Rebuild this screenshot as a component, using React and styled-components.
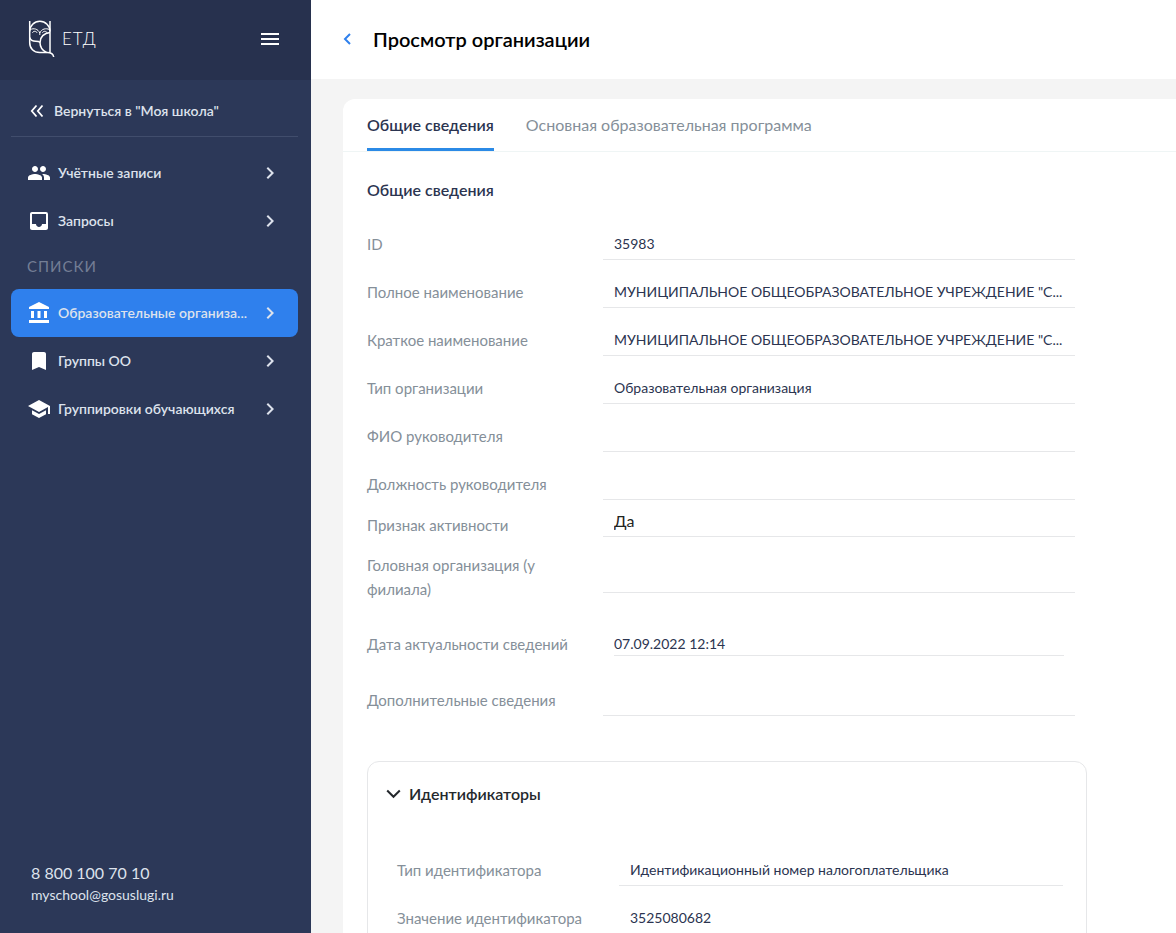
import React, { useId, useState } from 'react';
import styled, { createGlobalStyle, css } from 'styled-components';
import {
  MdAccountBalance,
  MdBookmark,
  MdChevronRight,
  MdInbox,
  MdMenu,
  MdPeople,
  MdSchool,
} from 'react-icons/md';

const navy = '#2c3858';
const darkNavy = '#27314e';
const blue = '#2f80ed';
const textColor = '#2b3450';
const labelColor = '#858f99';
const lineColor = '#e6e7e9';

const GlobalStyle = createGlobalStyle`
  * {
    box-sizing: border-box;
  }

  body {
    margin: 0;
    background: #f4f4f4;
    color: ${textColor};
    font-family: Lato, 'Open Sans', sans-serif;
    font-size: 15px;
    line-height: 24px;
  }

  button,
  input {
    font: inherit;
    color: inherit;
  }

  button {
    padding: 0;
    border: 0;
    background: none;
    cursor: pointer;
  }

  a {
    color: inherit;
    text-decoration: none;
  }
`;

const Layout = styled.div`
  display: flex;
  height: 100vh;
`;

const Sidebar = styled.aside`
  display: flex;
  flex: 0 0 311px;
  flex-direction: column;
  min-width: 0;
  background: ${navy};
  color: #dde2ec;
  font-size: 14px;
`;

const SidebarHeader = styled.div`
  display: flex;
  align-items: center;
  justify-content: space-between;
  height: 80px;
  padding: 0 29px 2px 27px;
  background: ${darkNavy};
  color: white;
`;

const Brand = styled.a`
  display: flex;
  align-items: center;
  gap: 7px;
  font-size: 17px;
  font-weight: 300;
  letter-spacing: 1px;
`;

const MenuButton = styled.button`
  display: flex;
  color: white;
`;

const BackLink = styled.a`
  display: flex;
  align-items: center;
  gap: 10px;
  height: 57px;
  margin: 0 13px 12px 11px;
  padding: 6px 0 0 19px;
  border-bottom: 1px solid #414d6c;
  font-weight: 600;
`;

const NavItem = styled.a`
  display: flex;
  align-items: center;
  height: 48px;
  margin: 0 13px 0 11px;
  padding: 0 16px;
  border-radius: 8px;
  font-weight: 600;

  > svg {
    flex: none;
  }

  > svg:first-child {
    color: white;
  }

  ${({ $active }) =>
    $active &&
    css`
      background: ${blue};
    `}
`;

const NavText = styled.span`
  flex: 1;
  padding-left: 7px;
  overflow: hidden;
  text-overflow: ellipsis;
  white-space: nowrap;
`;

const NavCaption = styled.div`
  padding: 9px 27px 11px;
  color: #747e95;
  font-size: 15px;
  letter-spacing: 1px;
  text-transform: uppercase;
`;

const Contacts = styled.address`
  display: flex;
  flex-direction: column;
  margin-top: auto;
  padding: 0 31px 27px;
  font-style: normal;
  line-height: 22px;
`;

const Phone = styled.a`
  font-size: 16px;
`;

const Main = styled.main`
  display: flex;
  flex: 1;
  flex-direction: column;
  min-width: 0;
`;

const PageHeader = styled.header`
  display: flex;
  flex: none;
  align-items: center;
  gap: 16px;
  height: 79px;
  padding: 0 26px 2px;
  background: white;
`;

const BackButton = styled.button`
  display: flex;
  color: ${blue};
`;

const Title = styled.h1`
  margin: 0;
  color: black;
  font-size: 20px;
  font-weight: 600;
`;

const Panel = styled.section`
  flex: 1;
  min-height: 0;
  margin: 20px 0 0 32px;
  overflow: hidden;
  border-radius: 12px 0 0 0;
  background: white;
`;

const Tabs = styled.div`
  display: flex;
  gap: 32px;
  height: 53px;
  padding: 0 24px;
  border-bottom: 1px solid #eff5f5;
`;

const Tab = styled.button`
  height: 52px;
  padding-top: 2px;
  border-bottom: 3px solid ${({ $active }) => ($active ? '#2b8ae6' : 'transparent')};
  color: ${({ $active }) => ($active ? textColor : labelColor)};
  font-size: 16px;
  font-weight: ${({ $active }) => ($active ? 600 : 400)};
`;

const TabContent = styled.div`
  max-width: 768px;
  padding: 26px 24px 0;
`;

const SectionTitle = styled.h2`
  margin: 0 0 18px;
  font-size: 16px;
  font-weight: 600;
`;

const FieldList = styled.div`
  padding-right: 12px;
`;

const FieldRow = styled.div`
  display: grid;
  grid-template-columns: 1fr 2fr;
  align-items: center;
  min-height: ${({ $height }) => $height || 48}px;
`;

const Label = styled.label`
  padding-right: 24px;
  color: ${labelColor};
`;

const Value = styled.input`
  width: 100%;
  height: 32px;
  padding: 0 11px 1px;
  border: 0;
  border-bottom: 1px solid ${lineColor};
  border-radius: 0;
  outline: 0;
  background: transparent;
  font-size: 14px;
  text-overflow: ellipsis;

  ${({ $variant }) =>
    $variant === 'flag' &&
    css`
      height: 32px;
      margin-top: -8px;
      padding-bottom: 0;
      color: #1f2522;
      font-size: 16px;
    `}

  ${({ $variant }) =>
    $variant === 'date' &&
    css`
      justify-self: center;
      width: calc(100% - 22px);
      height: 24px;
      padding: 0;
    `}
`;

const Group = styled.section`
  margin-top: 37px;
  border: 1px solid ${lineColor};
  border-radius: 12px;
`;

const GroupToggle = styled.button`
  display: flex;
  align-items: center;
  gap: 8px;
  padding: 20px 18px;
  color: #24282d;
  font-size: 16px;
  font-weight: 600;
`;

const GroupFields = styled.div`
  padding: 20px 23px 24px 29px;

  ${Label} {
    padding-right: 12px;
  }
`;

const OwlLogo = () => (
  <svg width="28" height="38" viewBox="0 0 28 38" fill="none" stroke="currentColor" strokeWidth="1.5">
    <path d="M2.700 1v21.500c0 6 4 10 10 10h7.300c4 0 6.300.8 6.700 4.500" />
    <path d="M23 1v31.500" />
    <path d="M2.700 11.500a10.100 10.100 0 0 1 20.300 0" />
    <path d="M2.700 17.500c.8 2.500 3 3.700 6 3.700 2 0 3.500.3 4.600 1.300" />
    <path d="M23 12.500c-6 .5-10 4.500-10 10 0 4.500 2.500 8 6.500 10" />
    <path d="M3.500 9.500c3-1.500 7.500-.8 9.300 3.500 1.800-4.300 6.300-5 9.500-3.500M12.800 12.500V15" strokeWidth="1" />
    <path d="M5.500 12.800c.5-2 4-2 4.500 0M15.500 12.800c.5-2 4-2 4.500 0" strokeWidth="1" />
  </svg>
);

const DoubleChevron = () => (
  <svg width="14" height="14" viewBox="0 0 14 14" fill="none" stroke="white" strokeWidth="1.800">
    <path d="M6.500 1.500 1.800 7l4.700 5.500M12.500 1.500 7.800 7l4.700 5.500" />
  </svg>
);

const BackChevron = () => (
  <svg width="20" height="20" viewBox="0 0 20 20" fill="none" stroke="currentColor" strokeWidth="2">
    <path d="M13 5 8 10l5 5" />
  </svg>
);

const DownChevron = () => (
  <svg width="15" height="10" viewBox="0 0 15 10" fill="none" stroke="currentColor" strokeWidth="2">
    <path d="m1.200 1.500 6.300 6.300 6.300-6.300" />
  </svg>
);

const fields = [
  { label: 'ID', value: '35983' },
  { label: 'Полное наименование', value: 'МУНИЦИПАЛЬНОЕ ОБЩЕОБРАЗОВАТЕЛЬНОЕ УЧРЕЖДЕНИЕ "С...' },
  { label: 'Краткое наименование', value: 'МУНИЦИПАЛЬНОЕ ОБЩЕОБРАЗОВАТЕЛЬНОЕ УЧРЕЖДЕНИЕ "С...' },
  { label: 'Тип организации', value: 'Образовательная организация' },
  { label: 'ФИО руководителя', value: '' },
  { label: 'Должность руководителя', value: '' },
  { label: 'Признак активности', value: 'Да', height: 34, variant: 'flag' },
  { label: 'Головная организация (у филиала)', value: '', height: 70 },
  { label: 'Дата актуальности сведений', value: '07.09.2022 12:14', height: 64, variant: 'date' },
  { label: 'Дополнительные сведения', value: '' },
];

const identifiers = [
  { label: 'Тип идентификатора', value: 'Идентификационный номер налогоплательщика' },
  { label: 'Значение идентификатора', value: '3525080682' },
];

const NavLink = ({ icon: Icon, active, children }) => (
  <NavItem href="#" $active={active} aria-current={active ? 'page' : undefined}>
    <Icon size={24} />
    <NavText>{children}</NavText>
    <MdChevronRight size={24} />
  </NavItem>
);

const Field = ({ label, value, height, variant }) => {
  const id = useId();
  return (
    <FieldRow $height={height}>
      <Label htmlFor={id}>{label}</Label>
      <Value id={id} value={value} $variant={variant} readOnly />
    </FieldRow>
  );
};

const App = () => {
  const [open, setOpen] = useState(true);

  return (
    <Layout>
      <GlobalStyle />
      <Sidebar>
        <SidebarHeader>
          <Brand href="#">
            <OwlLogo />
            ЕТД
          </Brand>
          <MenuButton type="button" aria-label="Меню">
            <MdMenu size={24} />
          </MenuButton>
        </SidebarHeader>
        <BackLink href="#">
          <DoubleChevron />
          Вернуться в "Моя школа"
        </BackLink>
        <nav>
          <NavLink icon={MdPeople}>Учётные записи</NavLink>
          <NavLink icon={MdInbox}>Запросы</NavLink>
          <NavCaption>Списки</NavCaption>
          <NavLink icon={MdAccountBalance} active>
            Образовательные организа...
          </NavLink>
          <NavLink icon={MdBookmark}>Группы ОО</NavLink>
          <NavLink icon={MdSchool}>Группировки обучающихся</NavLink>
        </nav>
        <Contacts>
          <Phone href="tel:88001007010">8 800 100 70 10</Phone>
          <a href="mailto:myschool@gosuslugi.ru">myschool@gosuslugi.ru</a>
        </Contacts>
      </Sidebar>
      <Main>
        <PageHeader>
          <BackButton type="button" aria-label="Назад">
            <BackChevron />
          </BackButton>
          <Title>Просмотр организации</Title>
        </PageHeader>
        <Panel>
          <Tabs role="tablist">
            <Tab type="button" role="tab" aria-selected="true" $active>
              Общие сведения
            </Tab>
            <Tab type="button" role="tab" aria-selected="false">
              Основная образовательная программа
            </Tab>
          </Tabs>
          <TabContent>
            <SectionTitle>Общие сведения</SectionTitle>
            <FieldList>
              {fields.map(field => (
                <Field key={field.label} {...field} />
              ))}
            </FieldList>
            <Group>
              <GroupToggle type="button" aria-expanded={open} onClick={() => setOpen(!open)}>
                <DownChevron />
                Идентификаторы
              </GroupToggle>
              {open && (
                <GroupFields>
                  {identifiers.map(field => (
                    <Field key={field.label} {...field} />
                  ))}
                </GroupFields>
              )}
            </Group>
          </TabContent>
        </Panel>
      </Main>
    </Layout>
  );
};

export default App;
